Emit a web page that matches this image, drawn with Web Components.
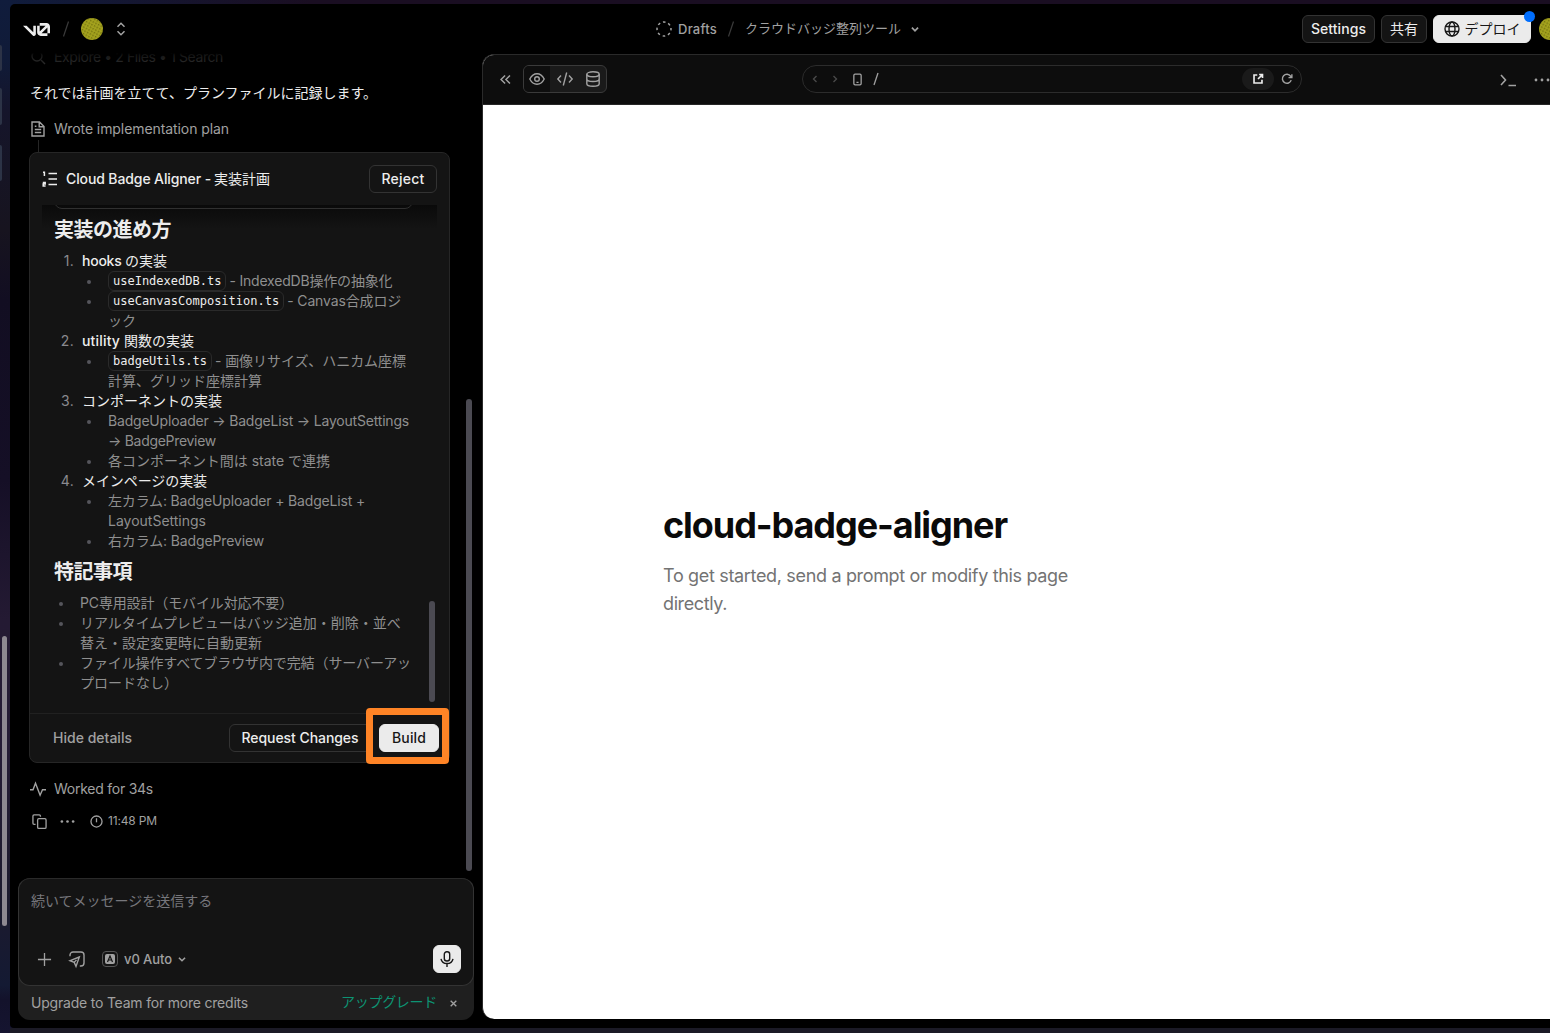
<!DOCTYPE html>
<html lang="ja">
<head>
<meta charset="utf-8">
<title>v0</title>
<style>
html,body{margin:0;height:100%;overflow:hidden;background:#17132a}
body{font-family:Inter,"Noto Sans CJK JP",sans-serif;font-size:14px;line-height:20px;color:#ededed}
</style>
</head>
<body>
<desktop-shell>
  <app-window>
    <top-bar slot="top"></top-bar>
    <chat-panel></chat-panel>
    <preview-panel></preview-panel>
  </app-window>
</desktop-shell>
<script>
const ICONS = {
  search:'<circle cx="7" cy="7" r="5"/><path d="M11 11l4 4"/>',
  updown:'<path d="M4 5.500L8 1.500l4 4M4 10.500L8 14.500l4-4"/>',
  dashed:'<circle cx="8" cy="8" r="7" stroke-dasharray="2.600 2.898" stroke-dashoffset="1.300"/>',
  down:'<path d="M4.500 6.500L8 10l3.500-3.500"/>',
  left:'<path d="M10 4L6 8l4 4"/>',
  right:'<path d="M6 4l4 4-4 4"/>',
  dleft:'<path d="M7.500 3L2.500 8l5 5M13.500 3L8.500 8l5 5"/>',
  globe:'<circle cx="8" cy="8" r="7"/><ellipse cx="8" cy="8" rx="3" ry="7"/><path d="M1.500 5.500h13M1.500 10.500h13"/>',
  eye:'<path d="M.8 8C2.400 4.800 5 2.700 8 2.700S13.600 4.800 15.200 8C13.600 11.200 11 13.300 8 13.300S2.400 11.200.8 8z"/><circle cx="8" cy="8" r="2.300"/>',
  code:'<path d="M4 4.500L.8 8 4 11.500M12 4.500L15.200 8 12 11.500M9.700 1.500L6.300 14.500"/>',
  db:'<ellipse cx="8" cy="3.300" rx="6.200" ry="2.500"/><path d="M1.800 3.300v9.400c0 1.400 2.800 2.500 6.200 2.500s6.200-1.100 6.200-2.500V3.300M1.800 8c0 1.400 2.800 2.500 6.200 2.500S14.200 9.400 14.200 8"/>',
  device:'<rect x="3.500" y="1.500" width="9" height="13" rx="1.500"/><path d="M6.700 11.500h2.600"/>',
  open:'<path d="M7 2.700H2.700v10.600h10.600V9"/><path d="M9.500 2h4.500v4.500M13.500 2.500L8 8"/>',
  reload:'<path d="M13.600 9.500A6 6 0 1 1 12.800 4.300L14.500 6.200M14.500 1.500v4.700H10"/>',
  term:'<path d="M1 3l4.500 5L1 13M8.500 13.500h7.500"/>',
  dots:'<g fill="currentColor" stroke="none"><circle cx="2" cy="8" r="1.400"/><circle cx="8" cy="8" r="1.400"/><circle cx="14" cy="8" r="1.400"/></g>',
  file:'<path d="M9.500 1H2v14h12V5.500L9.500 1zM9.200 1v4.800H14M4.800 5.200h1.600M4.800 8.500h6.400M4.800 11.500h6.400"/>',
  pulse:'<path d="M0 8.700h3L5.500 2.200l4.600 12 2.400-5.500H16"/>',
  copy:'<path d="M3.800 11H2.200A1.200 1.200 0 0 1 1 9.800V2.200A1.200 1.200 0 0 1 2.200 1h5.600A1.200 1.200 0 0 1 9 2.200v.8"/><rect x="6" y="5" width="9" height="10.300" rx="1.300"/>',
  clock:'<circle cx="8" cy="8" r="6.800"/><path d="M8 4v5"/>',
  plus:'<path d="M8 1v14M1 8h14"/>',
  design:'<path d="M1 5.200V4a3 3 0 0 1 3-3h8a3 3 0 0 1 3 3v8a3 3 0 0 1-3 3h-1.200"/><path d="M10.300 6L1 9.700l4.200 1.700 1.800 4L10.300 6zM5.200 11.400l2.300-2.500"/>',
  mic:'<rect x="5.300" y=".8" width="5.400" height="9.200" rx="2.500"/><path d="M2 7.800c.6 3 3 4.700 6 4.700s5.400-1.700 6-4.700M8 12.500V16"/>',
  list:'<path d="M6.500 2.500H15M6.500 8H15M6.500 13.500H15"/><path d="M1 1.300H2.400v3.700M.8 11.500H3.200v1.600H1.200v1.900H3.600" stroke-width="1.500"/>',
  close:'<path d="M3 3l10 10M13 3L3 13"/>'
};

class Base extends HTMLElement{
  connectedCallback(){
    if(this.shadowRoot) return;
    this.attachShadow({mode:'open'}).innerHTML=this.view();
  }
}
const def=(name,view)=>customElements.define(name,class extends Base{view(){return view(this)}});

def('ui-icon',el=>`<style>:host{display:inline-flex;flex:none;color:#a1a1a1}svg{display:block;overflow:visible}</style>
<svg width="${el.getAttribute('s')||16}" height="${el.getAttribute('s')||16}" viewBox="0 0 16 16" fill="none" stroke="currentColor" stroke-width="${el.getAttribute('k')||1.4}">${ICONS[el.getAttribute('n')]}</svg>`);

def('ui-button',()=>`<style>
:host{display:inline-flex;box-sizing:border-box;height:28px;align-items:center;justify-content:center;gap:6px;border:1px solid #333;border-radius:6px;background:#141414;color:#ededed;font-weight:500;flex:none}
:host([primary]){background:#ebebeb;border-color:#ebebeb;color:#171717}
</style><slot></slot>`);

def('user-avatar',()=>`<style>:host{display:block;flex:none;width:22px;height:22px}svg{display:block}</style>
<svg width="22" height="22" viewBox="0 0 22 22"><defs><pattern id="p" width="3" height="3" patternUnits="userSpaceOnUse" patternTransform="rotate(28)"><rect width="3" height="3" fill="#a5a31e"/><rect width="1.500" height="1.500" fill="#77760f"/></pattern></defs><circle cx="11" cy="11" r="11" fill="url(#p)"/></svg>`);

def('desktop-shell',()=>`<style>
:host{display:flex;box-sizing:border-box;width:1550px;height:1033px;padding:4px 0 5px 10px;overflow:hidden;position:relative;
background:linear-gradient(90deg,#101c3c 0,#1a0e22 300px) 10px 0/1540px 4px no-repeat,linear-gradient(#1b1a26,#1b1a26) 10px 1028px/1540px 5px no-repeat,linear-gradient(#101c3c 0,#101b38 60px,#15152b 110px,#17141f 230px,#120e22 300px,#150f26 480px,#241a33 620px,#241b35 760px,#1c1a2e 900px,#141a33 985px,#13122b 1000px,#151430 1033px)}
i{position:absolute;left:0;width:2px;background:#2c3346;border-radius:0 3px 3px 0}
b{position:absolute;left:2px;top:636px;width:5px;height:290px;border-radius:3px;background:#8d8891}
</style><i style="top:45px;height:26px"></i><i style="top:88px;height:37px"></i><i style="top:145px;height:36px"></i><b></b><slot></slot>`);

def('app-window',()=>`<style>
:host{display:flex;flex-direction:column;flex:1;min-width:0;background:#000;border-radius:5px 0 0 4px;overflow:hidden}
div{display:flex;flex:1;min-height:0}
</style><slot name="top"></slot><div><slot></slot></div>`);

def('top-bar',()=>`<style>
:host{display:flex;height:50px;box-sizing:border-box;padding-left:13px;align-items:center;flex:none}
.l{display:flex;align-items:center;width:632px;flex:none}
.l ui-icon{margin-left:11px}
.c{display:flex;align-items:center;color:#a1a1a1;font-size:13px;width:647px;padding-left:1px;box-sizing:border-box;flex:none}
.c ui-icon:first-child{margin-right:6px}.c b{font-weight:500}
.sep{margin:0 10px 0 13px}.sep path{stroke:#3a3a3a}
.r{display:flex;align-items:center;gap:6px;width:248px;flex:none}
.r user-avatar{margin-left:2px}
.d{position:relative}.dot{position:absolute;right:-5px;top:-5px;width:11px;height:11px;border-radius:50%;background:#006efe}
.jp{position:relative;top:-1px}
</style>
<div class="l">
<svg width="27" height="13" viewBox="0 0 147 70" fill="#ededed"><path d="M56 50.203V14H70V60.156C70 65.593 65.593 70 60.156 70C57.560 70 54.998 68.999 53.156 67.157L0 14H19.797L56 50.203Z"/><path d="M147 56H133V23.953L100.953 56H133V70H96.688C85.814 70 77 61.186 77 50.313V14H91V46.156L123.156 14H91V0H127.313C138.186 0 147 8.814 147 19.688V56Z"/></svg>
<svg class="sep" width="6" height="16" viewBox="0 0 6 16"><path d="M5.500 .5L.5 15.500" stroke-width="1.200"/></svg>
<user-avatar style="margin-left:2px"></user-avatar><ui-icon n="updown" s="14" k="1.700"></ui-icon></div>
<div class="c"><ui-icon n="dashed" k="1.500"></ui-icon><b><fit-text w="39">Drafts</fit-text></b>
<svg class="sep" width="6" height="16" viewBox="0 0 6 16" style="margin:0 11px"><path d="M5.500 .5L.5 15.500" stroke-width="1.200"/></svg>
<fit-text class="jp" w="156">クラウドバッジ整列ツール</fit-text><ui-icon n="down" k="2" s="14" style="margin-left:7px"></ui-icon></div>
<div class="r"><ui-button style="width:73px"><fit-text w="55">Settings</fit-text></ui-button><ui-button style="width:46px;font-weight:400">共有</ui-button>
<ui-button primary class="d" style="width:98px;font-weight:400;gap:5px"><ui-icon n="globe" style="color:#171717"></ui-icon>デプロイ<span class="dot"></span></ui-button><user-avatar></user-avatar></div>`);

def('chat-panel',()=>`<style>
:host{display:flex;flex-direction:column;width:472px;flex:none;position:relative}
.scroll{height:824px;padding:0 0 0 19px;box-sizing:border-box;flex:none;display:flex;flex-direction:column}
.row{display:flex;align-items:center;height:20px;color:#a1a1a1;gap:8px;padding-left:1px;flex:none}
.top{margin-top:-7px;color:#333}
.top ui-icon{color:#333}
p{margin:16px 0;padding-left:1px}
.line{width:1px;height:12px;margin:1px 0 0 9px;background:#262626;flex:none}
.fade{position:absolute;left:0;top:-9px;width:472px;height:22px;background:linear-gradient(#000 8px,#0009 10px,#0000)}
.thumb{position:absolute;left:456px;top:345px;width:6px;height:472px;border-radius:3px;background:#4b4a52}
.act{margin-top:12px;padding-left:3px;font-size:12px;gap:0}
chat-composer{margin-left:8px}
</style>
<div class="scroll">
<div class="row top"><ui-icon n="search"></ui-icon><fit-text w="169">Explore • 2 Files • 1 Search</fit-text></div>
<p>それでは計画を立てて、プランファイルに記録します。</p>
<div class="row"><ui-icon n="file"></ui-icon><fit-text w="175">Wrote implementation plan</fit-text></div>
<div class="line"></div>
<plan-card></plan-card>
<div class="row" style="margin-top:16px"><ui-icon n="pulse"></ui-icon><fit-text w="99">Worked for 34s</fit-text></div>
<div class="row act"><ui-icon n="copy" s="15"></ui-icon><ui-icon n="dots" s="15" style="margin:0 15px 0 13px"></ui-icon><ui-icon n="clock" s="13" k="1.600" style="margin-right:5px"></ui-icon><fit-text w="49">11:48 PM</fit-text></div>
</div>
<div class="fade"></div><div class="thumb"></div>
<chat-composer></chat-composer>`);

def('code-chip',()=>`<style>:host{display:inline-block;box-sizing:border-box;height:20px;line-height:19px;border:1px solid #2a2a2a;border-radius:6px;padding:0 4px;font-family:"DejaVu Sans Mono",monospace;font-size:12px;color:#ededed;margin-right:3px;vertical-align:top;white-space:nowrap}</style><slot></slot>`);

def('step-item',el=>`<style>:host{display:block}.h{display:flex;height:20px;color:#ededed;font-weight:500}.n{width:20px;text-align:right;margin-right:8px;color:#8a8a8f;font-weight:400;letter-spacing:.3px}</style>
<div class="h"><span class="n">${el.getAttribute('n')}.</span><slot name="t"></slot></div><slot></slot>`);

def('bullet-item',()=>`<style>:host{display:flex;padding-left:33px;color:#8f8f8f;white-space:nowrap}:host([flat]){padding-left:5px}i{width:4px;height:4px;border-radius:50%;background:#55555c;margin:9px 17px 0 0;flex:none}
div{display:block;min-height:20px}::slotted(div){height:20px}</style><i></i><div><slot></slot></div>`);

def('plan-card',()=>`<style>
:host{display:flex;flex-direction:column;width:421px;height:611px;box-sizing:border-box;border:1px solid #262626;border-radius:8px;background:#141414;position:relative;flex:none}
header{display:flex;align-items:center;height:52px;padding:0 12px;font-weight:500;gap:8px;flex:none}
header ui-button{margin-left:auto}
.jp{font-weight:400}
.body{height:508px;box-sizing:border-box;margin:0 12px;overflow:hidden;position:relative;padding-left:12px;flex:none}
.shade{position:absolute;left:0;right:0;top:0;height:24px;background:linear-gradient(#0a0a0a,#14141400)}
.prev{position:absolute;left:12px;top:-12px;width:357px;height:14px;border:1px solid #303030;border-radius:8px;box-sizing:content-box}
h3{margin:13px 0 9px;font-size:20px;line-height:24px;height:24px;font-weight:700;position:relative;white-space:nowrap}
h3.b{margin-top:9px}
footer{display:flex;align-items:center;height:48px;box-sizing:border-box;border-top:1px solid #212121;padding:0 10px 0 23px;color:#a1a1a1;flex:none;font-weight:500}
footer ui-button:first-of-type{margin-left:auto;margin-right:8px}
.thumb{position:absolute;left:399px;top:448px;width:6px;height:101px;border-radius:3px;background:#4b4a52}
.mark{position:absolute;left:336px;top:555px;width:69px;height:42px;border:7px solid #ff8426;border-radius:4px;background:#141414;display:flex;align-items:center;justify-content:center}
</style>
<header><ui-icon n="list" style="color:#ededed"></ui-icon><span><fit-text w="145">Cloud Badge Aligner -</fit-text><span class="jp" style="margin-left:3px">実装計画</span></span><ui-button style="width:68px"><fit-text w="43">Reject</fit-text></ui-button></header>
<div class="body"><div class="shade"></div><div class="prev"></div>
<h3><fit-text w="117">実装の進め方</fit-text></h3>
<step-item n="1"><span slot="t"><fit-text w="43">hooks </fit-text><span class="jp">の実装</span></span>
<bullet-item><code-chip>useIndexedDB.ts</code-chip><fit-text w="163">- IndexedDB操作の抽象化</fit-text></bullet-item>
<bullet-item><div><code-chip>useCanvasComposition.ts</code-chip><fit-text w="114">- Canvas合成ロジ</fit-text></div><div>ック</div></bullet-item></step-item>
<step-item n="2"><span slot="t"><fit-text w="42">utility </fit-text><span class="jp">関数の実装</span></span>
<bullet-item><div><code-chip>badgeUtils.ts</code-chip><fit-text w="191">- 画像リサイズ、ハニカム座標</fit-text></div><div>計算、グリッド座標計算</div></bullet-item></step-item>
<step-item n="3"><span slot="t" class="jp">コンポーネントの実装</span>
<bullet-item><div><fit-text w="301">BadgeUploader → BadgeList → LayoutSettings</fit-text></div><div><fit-text w="108">→ BadgePreview</fit-text></div></bullet-item>
<bullet-item><fit-text w="222">各コンポーネント間は state で連携</fit-text></bullet-item></step-item>
<step-item n="4"><span slot="t" class="jp"><fit-text w="125">メインページの実装</fit-text></span>
<bullet-item><div><fit-text w="257">左カラム: BadgeUploader + BadgeList +</fit-text></div><div><fit-text w="98">LayoutSettings</fit-text></div></bullet-item>
<bullet-item><fit-text w="156">右カラム: BadgePreview</fit-text></bullet-item></step-item>
<h3 class="b"><fit-text w="78">特記事項</fit-text></h3>
<bullet-item flat><fit-text w="213">PC専用設計（モバイル対応不要）</fit-text></bullet-item>
<bullet-item flat><div>リアルタイムプレビューはバッジ追加・削除・並べ</div><div>替え・設定変更時に自動更新</div></bullet-item>
<bullet-item flat><div><fit-text w="331">ファイル操作すべてブラウザ内で完結（サーバーアッ</fit-text></div><div>プロードなし）</div></bullet-item>
</div>
<footer><fit-text w="79">Hide details</fit-text><ui-button style="width:142px"><fit-text w="117">Request Changes</fit-text></ui-button><span style="width:60px"></span></footer>
<div class="thumb"></div><div class="mark"><ui-button primary style="width:60px;margin-left:3px;margin-top:3px"><fit-text w="34">Build</fit-text></ui-button></div>`);

def('chat-composer',()=>`<style>
:host{display:block;width:456px;height:142px;background:#1f1f1f;border-radius:12px;flex:none}
.in{height:108px;box-sizing:border-box;border:1px solid #333;border-top-color:#2a2a2a;border-radius:12px;background:#141414;padding:12px;display:flex;flex-direction:column;justify-content:space-between;color:#77777c}
.tools{display:flex;align-items:center;height:28px;color:#a1a1a1;font-size:13px;font-weight:500}
.a{width:16px;height:16px;box-sizing:border-box;border:1px solid #555;border-radius:4px;margin:0 6px 0 17px;display:flex;align-items:center;justify-content:center}
.mic{margin-left:auto;width:28px}
.up{display:flex;align-items:center;height:34px;padding:0 16px 0 13px;color:#a1a1a1}
.up a{color:#0d9373;margin:-3px 12px 0 auto}
</style>
<div class="in"><div>続いてメッセージを送信する</div>
<div class="tools"><ui-icon n="plus" s="15" style="margin-left:6px"></ui-icon><ui-icon n="design" style="margin-left:17px"></ui-icon>
<span class="a"><svg width="10" height="10" viewBox="0 0 10 10"><rect width="10" height="10" rx="2" fill="#a1a1a1"/><path d="M2.500 8L5 2l2.500 6M3.400 6h3.200" fill="none" stroke="#141414" stroke-width="1.200"/></svg></span>
<fit-text w="48">v0 Auto</fit-text><ui-icon n="down" s="14" k="1.800" style="margin-left:3px"></ui-icon>
<ui-button primary class="mic"><ui-icon n="mic" style="color:#171717"></ui-icon></ui-button></div></div>
<div class="up"><fit-text w="217">Upgrade to Team for more credits</fit-text><a><fit-text w="96">アップグレード</fit-text></a><ui-icon n="close" s="9" k="2.400"></ui-icon></div>`);

def('preview-panel',()=>`<style>
:host{display:flex;flex-direction:column;flex:1;min-width:0;height:965px;box-sizing:border-box;border:1px solid #2a2a2a;border-right:0;border-bottom:0;border-radius:12px 0 0 12px;overflow:hidden;background:#fff}
nav{height:49px;background:#0d0d0d;border-bottom:1px solid #262626;display:flex;align-items:center;padding-left:16px;flex:none;position:relative}
.seg{display:flex;box-sizing:border-box;width:84px;height:28px;border:1px solid #3a3a3a;border-radius:6px;background:#1a1a1a;margin-left:11px;margin-top:-1px;overflow:hidden}
.seg span{width:28px;display:flex;align-items:center;justify-content:center}.seg span:first-child{background:#0e0e0e;width:26px}
.seg span:nth-child(2){width:29px}.seg span:nth-child(3){width:27px}
.url{display:flex;align-items:center;box-sizing:border-box;width:500px;height:28px;border:1px solid #2c2c2c;border-radius:14px;margin-left:195px;margin-top:-1px;padding:0 8px 0 6px;color:#a1a1a1}
.dim{color:#4a4a4a;margin-right:8px}
.ext{margin-left:auto;width:32px;height:22px;border-radius:11px;background:#1a1a1a;display:flex;align-items:center;justify-content:center;margin-right:7px}
main{padding:400px 0 0 180px;color:#0a0a0a}
h1{margin:0;font-size:36px;line-height:40px;font-weight:700}
p{margin:17px 0 0;font-size:18px;line-height:28px;color:#737373}
</style>
<nav><ui-icon n="dleft" s="13" k="1.800"></ui-icon>
<div class="seg"><span><ui-icon n="eye"></ui-icon></span><span><ui-icon n="code"></ui-icon></span><span><ui-icon n="db"></ui-icon></span></div>
<div class="url"><ui-icon class="dim" n="left" s="12" k="1.800"></ui-icon><ui-icon class="dim" n="right" s="12" k="1.800"></ui-icon><ui-icon n="device" s="13" k="1.600" style="margin:0 9px 0 2px"></ui-icon><svg width="6" height="14" viewBox="0 0 6 14"><path d="M5 1L1 13" stroke="#a1a1a1" stroke-width="1.300"/></svg>
<span class="ext"><ui-icon n="open" s="12" k="2.200" style="color:#ededed"></ui-icon></span><ui-icon n="reload" s="12" k="1.900"></ui-icon></div>
<ui-icon n="term" k="1.600" style="margin-left:198px"></ui-icon><ui-icon n="dots" k="1.500" style="margin-left:18px"></ui-icon></nav>
<main><h1><fit-text w="344">cloud-badge-aligner</fit-text></h1><p><fit-text w="405">To get started, send a prompt or modify this page</fit-text><br><fit-text w="64">directly.</fit-text></p></main>`);

/* Spreads its text over the width in "w" by adjusting the letter spacing. */
customElements.define('fit-text',class extends HTMLElement{
  connectedCallback(){
    if(this.shadowRoot) return;
    this.attachShadow({mode:'open'}).innerHTML='<style>:host{display:inline-block;white-space:pre;vertical-align:top;flex:none}</style><slot></slot>';
    const w=+this.getAttribute('w'),n=[...this.textContent].length;
    this.style.letterSpacing=((w-this.getBoundingClientRect().width)/n).toFixed(3)+'px';
  }
});
</script>
</body>
</html>
